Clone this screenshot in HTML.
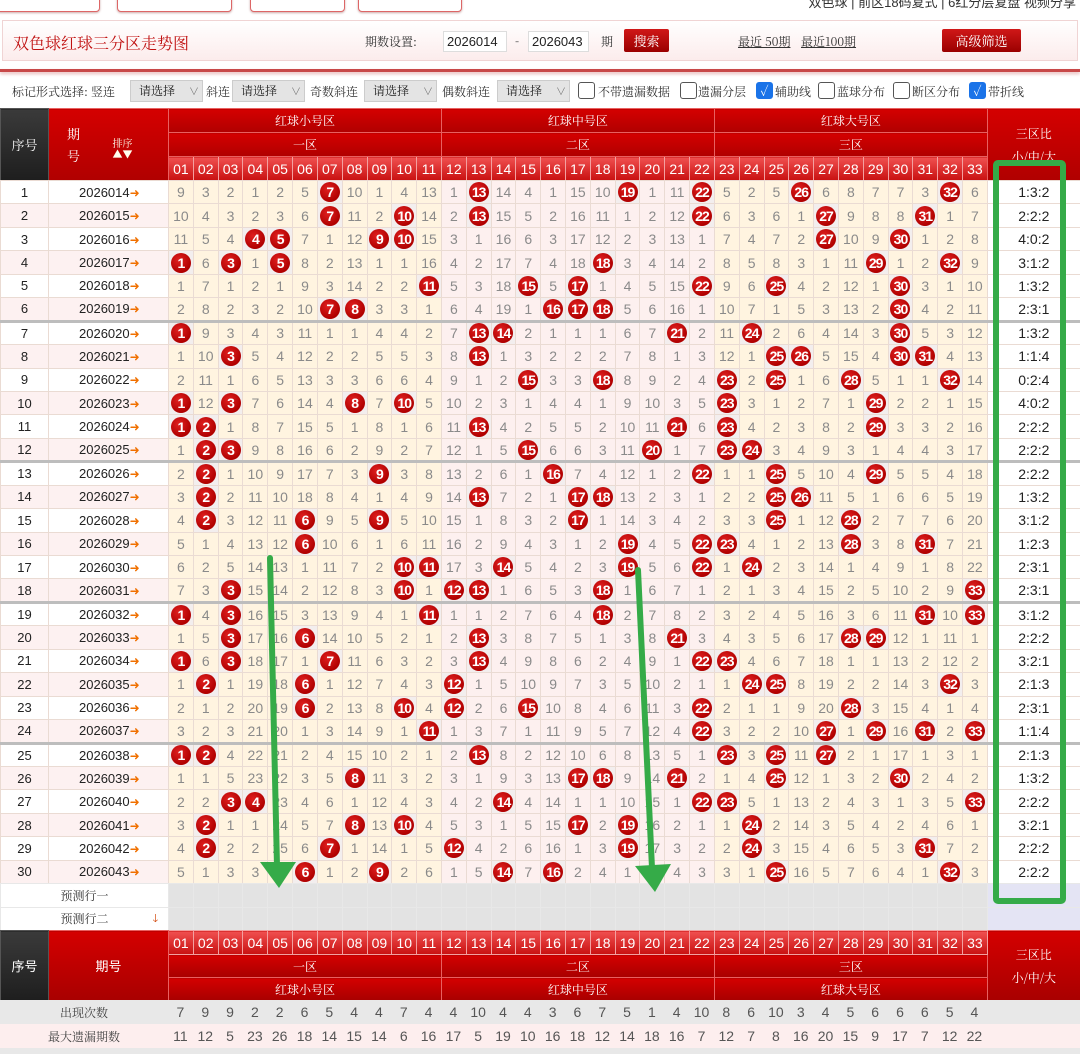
<!DOCTYPE html>
<html><head><meta charset="utf-8">
<style>
*{box-sizing:border-box;margin:0;padding:0}
html,body{width:1080px;height:1054px;overflow:hidden}
body{background:#fff;font-family:"Liberation Sans Narrow","Liberation Sans","Noto Sans CJK SC",sans-serif;position:relative;color:#333}
.tab{position:absolute;top:-10px;height:22px;border:1px solid #d66;border-radius:4px;background:#fff;box-shadow:0 1px 2px #caa}
.topr{position:absolute;top:-8px;right:4px;font-size:13px;color:#333;white-space:nowrap}
.hdr{position:absolute;left:2px;top:20px;width:1076px;height:41px;background:linear-gradient(#fff,#fcecec);border:1px solid #f0d4d4}
.hdr .t{position:absolute;left:10px;top:10px;font-size:16px;color:#c01010;font-family:"Noto Serif CJK SC","Liberation Serif",serif}
.hdr span{position:absolute;font-size:12px;color:#333;font-family:"Noto Serif CJK SC",serif}
.inp{position:absolute;top:10px;height:21px;border:1px solid #ddd;background:#fff;font-size:13px;line-height:19px;padding-left:3px;color:#222}
.btn{position:absolute;top:8px;height:23px;background:linear-gradient(#d01818,#9a0000);color:#fff;font-size:13px;line-height:23px;text-align:center;border-radius:2px;font-family:"Noto Serif CJK SC",serif}
.lnk{text-decoration:underline}
.redline{position:absolute;left:0;top:69px;width:1080px;height:3px;background:#c84848;box-shadow:0 2px 3px #e8b8b8}
.tb{position:absolute;left:0;top:76px;width:1080px;height:30px;font-size:12px;font-family:"Noto Serif CJK SC",serif;color:#333}
.tb span{position:absolute;top:7px}
.sel{position:absolute;top:4px;height:22px;background:#e4e4e4;border:1px solid #ccc;font-size:12px;line-height:20px;padding-left:8px;color:#222}
.sel:after{content:"∨";position:absolute;right:3px;top:0;font-size:10px;color:#555}
.cb{position:absolute;top:6px;width:17px;height:17px;border:1px solid #555;border-radius:3px;background:#fff}
.cb.on{background:#1a73e8;border-color:#1a73e8;color:#fff;font-size:13px;line-height:16px;text-align:center}
table{border-collapse:collapse;table-layout:fixed;position:absolute;left:0;width:1080px}
td{padding:0;text-align:center;overflow:hidden;white-space:nowrap}
#th{top:108px}
#th td{color:#fff;font-family:"Noto Serif CJK SC",serif;font-size:12px;background:linear-gradient(#d40000,#b00000);border:1px solid #e86060}
#th td.dk,#bh td.dk{background:linear-gradient(#3a3a3a,#1e1e1e);border-color:#555}
#th tr.nums td,#bh tr.nums td{background:linear-gradient(#f05050,#c81010);font-family:"Liberation Sans Narrow","Liberation Sans",sans-serif;font-size:14px;border:1px solid #f3a0a0}
#dt{top:180px}
#dt tr{height:23.45px}
#dt td{font-size:14px;color:#8a8a8a;border:1px solid #eadbd3}
#dt td.n{color:#222;background:#fff;font-size:13px}
#dt td.p{color:#222;background:#fff;font-size:13px;text-align:left;padding-left:30px}
#dt tr:nth-child(even) td.n,#dt tr:nth-child(even) td.p{background:#fdf1f1}
#dt td.p i{font-style:normal;color:#f07000;font-size:12px}
#dt td.r{background:#fff;color:#222;font-size:14px}
#dt td.h{background:#f3eeee}
#dt tr.s td{border-bottom:3px solid #bdbdbd}
#dt b{display:inline-block;width:20px;height:20px;border-radius:50%;background:radial-gradient(circle at 40% 35%,#e02020,#b00000 70%);color:#fff;font-size:14px;line-height:20px;font-weight:bold;letter-spacing:-1px;vertical-align:middle}
col.z1,col.z3{background:#fff4e0}
col.z2{background:#fdf0ef}
#pr{top:883px}
#pr td{height:23.5px;border:1px solid #e8e8e8;background:#e3e3e3;font-size:12px;font-family:"Noto Serif CJK SC",serif;color:#333}
#pr td.w{background:#fff}
#pr td.l{background:#e4e4f4}
#bh{top:930px}
#bh td{color:#fff;font-family:"Noto Serif CJK SC",serif;font-size:12px;background:linear-gradient(#d40000,#a80000);border:1px solid #e86060}
#st{top:1000px}
#st td{height:24px;font-size:14px;color:#555;background:#e8e8e8;border:0}
#st tr.pk td{background:#fdeeee}
#st td.lb{font-family:"Noto Serif CJK SC",serif;font-size:12px;color:#444}
svg.ov{position:absolute;left:0;top:0}
</style></head><body>
<div class="tab" style="left:-4px;width:104px"></div>
<div class="tab" style="left:117px;width:115px"></div>
<div class="tab" style="left:250px;width:95px"></div>
<div class="tab" style="left:358px;width:104px"></div>
<div class="topr">双色球 | 前区18码复式 | 6红分层复盘 视频分享</div>
<div class="hdr">
<div class="t">双色球红球三分区走势图</div>
<span style="left:362px;top:12px">期数设置:</span>
<div class="inp" style="left:440px;width:64px">2026014</div>
<span style="left:512px;top:11px">-</span>
<div class="inp" style="left:525px;width:61px">2026043</div>
<span style="left:598px;top:12px">期</span>
<div class="btn" style="left:621px;width:45px">搜索</div>
<span class="lnk" style="left:735px;top:12px">最近 50期</span>
<span class="lnk" style="left:798px;top:12px">最近100期</span>
<div class="btn" style="left:939px;width:79px">高级筛选</div>
</div>
<div class="redline"></div>
<div class="tb">
<span style="left:12px">标记形式选择: 竖连</span>
<div class="sel" style="left:130px;width:73px">请选择</div>
<span style="left:206px">斜连</span>
<div class="sel" style="left:232px;width:73px">请选择</div>
<span style="left:310px">奇数斜连</span>
<div class="sel" style="left:364px;width:73px">请选择</div>
<span style="left:442px">偶数斜连</span>
<div class="sel" style="left:497px;width:73px">请选择</div>
<div class="cb" style="left:578px"></div><span style="left:598px">不带遗漏数据</span>
<div class="cb" style="left:680px"></div><span style="left:698px">遗漏分层</span>
<div class="cb on" style="left:756px">✓</div><span style="left:775px">辅助线</span>
<div class="cb" style="left:818px"></div><span style="left:837px">蓝球分布</span>
<div class="cb" style="left:893px"></div><span style="left:912px">断区分布</span>
<div class="cb on" style="left:969px">✓</div><span style="left:988px">带折线</span>
</div>

<table id="th">
<colgroup><col style="width:48px"><col style="width:120px"><col span="33" style="width:24.82px"><col style="width:93px"></colgroup>
<tr style="height:24px"><td class="dk" rowspan="3" style="font-size:13px">序号</td><td rowspan="3" style="font-size:13px;line-height:22px;text-align:left;padding-left:18px">期<br>号<span style="position:absolute;left:112px;top:28px;font-size:10px;line-height:11px;color:#ffe">排序<br>▲▼</span></td><td colspan="11">红球小号区</td><td colspan="11">红球中号区</td><td colspan="11">红球大号区</td><td rowspan="3" style="line-height:23px;font-size:12px">三区比<br>小/中/大</td></tr>
<tr style="height:24px"><td colspan="11">一区</td><td colspan="11">二区</td><td colspan="11">三区</td></tr>
<tr class="nums" style="height:24px"><td>01</td><td>02</td><td>03</td><td>04</td><td>05</td><td>06</td><td>07</td><td>08</td><td>09</td><td>10</td><td>11</td><td>12</td><td>13</td><td>14</td><td>15</td><td>16</td><td>17</td><td>18</td><td>19</td><td>20</td><td>21</td><td>22</td><td>23</td><td>24</td><td>25</td><td>26</td><td>27</td><td>28</td><td>29</td><td>30</td><td>31</td><td>32</td><td>33</td></tr>
</table>

<table id="dt">
<colgroup><col style="width:48px"><col style="width:120px"><col class="z1" span="11" style="width:24.82px"><col class="z2" span="11" style="width:24.82px"><col class="z3" span="11" style="width:24.82px"><col style="width:93px"></colgroup>
<tr><td class="n">1</td><td class="p">2026014<i>➜</i></td><td>9</td><td>3</td><td>2</td><td>1</td><td>2</td><td>5</td><td class="h"><b>7</b></td><td>10</td><td>1</td><td>4</td><td>13</td><td>1</td><td class="h"><b>13</b></td><td>14</td><td>4</td><td>1</td><td>15</td><td>10</td><td class="h"><b>19</b></td><td>1</td><td>11</td><td class="h"><b>22</b></td><td>5</td><td>2</td><td>5</td><td class="h"><b>26</b></td><td>6</td><td>8</td><td>7</td><td>7</td><td>3</td><td class="h"><b>32</b></td><td>6</td><td class="r">1:3:2</td></tr>
<tr><td class="n">2</td><td class="p">2026015<i>➜</i></td><td>10</td><td>4</td><td>3</td><td>2</td><td>3</td><td>6</td><td class="h"><b>7</b></td><td>11</td><td>2</td><td class="h"><b>10</b></td><td>14</td><td>2</td><td class="h"><b>13</b></td><td>15</td><td>5</td><td>2</td><td>16</td><td>11</td><td>1</td><td>2</td><td>12</td><td class="h"><b>22</b></td><td>6</td><td>3</td><td>6</td><td>1</td><td class="h"><b>27</b></td><td>9</td><td>8</td><td>8</td><td class="h"><b>31</b></td><td>1</td><td>7</td><td class="r">2:2:2</td></tr>
<tr><td class="n">3</td><td class="p">2026016<i>➜</i></td><td>11</td><td>5</td><td>4</td><td class="h"><b>4</b></td><td class="h"><b>5</b></td><td>7</td><td>1</td><td>12</td><td class="h"><b>9</b></td><td class="h"><b>10</b></td><td>15</td><td>3</td><td>1</td><td>16</td><td>6</td><td>3</td><td>17</td><td>12</td><td>2</td><td>3</td><td>13</td><td>1</td><td>7</td><td>4</td><td>7</td><td>2</td><td class="h"><b>27</b></td><td>10</td><td>9</td><td class="h"><b>30</b></td><td>1</td><td>2</td><td>8</td><td class="r">4:0:2</td></tr>
<tr><td class="n">4</td><td class="p">2026017<i>➜</i></td><td class="h"><b>1</b></td><td>6</td><td class="h"><b>3</b></td><td>1</td><td class="h"><b>5</b></td><td>8</td><td>2</td><td>13</td><td>1</td><td>1</td><td>16</td><td>4</td><td>2</td><td>17</td><td>7</td><td>4</td><td>18</td><td class="h"><b>18</b></td><td>3</td><td>4</td><td>14</td><td>2</td><td>8</td><td>5</td><td>8</td><td>3</td><td>1</td><td>11</td><td class="h"><b>29</b></td><td>1</td><td>2</td><td class="h"><b>32</b></td><td>9</td><td class="r">3:1:2</td></tr>
<tr><td class="n">5</td><td class="p">2026018<i>➜</i></td><td>1</td><td>7</td><td>1</td><td>2</td><td>1</td><td>9</td><td>3</td><td>14</td><td>2</td><td>2</td><td class="h"><b>11</b></td><td>5</td><td>3</td><td>18</td><td class="h"><b>15</b></td><td>5</td><td class="h"><b>17</b></td><td>1</td><td>4</td><td>5</td><td>15</td><td class="h"><b>22</b></td><td>9</td><td>6</td><td class="h"><b>25</b></td><td>4</td><td>2</td><td>12</td><td>1</td><td class="h"><b>30</b></td><td>3</td><td>1</td><td>10</td><td class="r">1:3:2</td></tr>
<tr class="s"><td class="n">6</td><td class="p">2026019<i>➜</i></td><td>2</td><td>8</td><td>2</td><td>3</td><td>2</td><td>10</td><td class="h"><b>7</b></td><td class="h"><b>8</b></td><td>3</td><td>3</td><td>1</td><td>6</td><td>4</td><td>19</td><td>1</td><td class="h"><b>16</b></td><td class="h"><b>17</b></td><td class="h"><b>18</b></td><td>5</td><td>6</td><td>16</td><td>1</td><td>10</td><td>7</td><td>1</td><td>5</td><td>3</td><td>13</td><td>2</td><td class="h"><b>30</b></td><td>4</td><td>2</td><td>11</td><td class="r">2:3:1</td></tr>
<tr><td class="n">7</td><td class="p">2026020<i>➜</i></td><td class="h"><b>1</b></td><td>9</td><td>3</td><td>4</td><td>3</td><td>11</td><td>1</td><td>1</td><td>4</td><td>4</td><td>2</td><td>7</td><td class="h"><b>13</b></td><td class="h"><b>14</b></td><td>2</td><td>1</td><td>1</td><td>1</td><td>6</td><td>7</td><td class="h"><b>21</b></td><td>2</td><td>11</td><td class="h"><b>24</b></td><td>2</td><td>6</td><td>4</td><td>14</td><td>3</td><td class="h"><b>30</b></td><td>5</td><td>3</td><td>12</td><td class="r">1:3:2</td></tr>
<tr><td class="n">8</td><td class="p">2026021<i>➜</i></td><td>1</td><td>10</td><td class="h"><b>3</b></td><td>5</td><td>4</td><td>12</td><td>2</td><td>2</td><td>5</td><td>5</td><td>3</td><td>8</td><td class="h"><b>13</b></td><td>1</td><td>3</td><td>2</td><td>2</td><td>2</td><td>7</td><td>8</td><td>1</td><td>3</td><td>12</td><td>1</td><td class="h"><b>25</b></td><td class="h"><b>26</b></td><td>5</td><td>15</td><td>4</td><td class="h"><b>30</b></td><td class="h"><b>31</b></td><td>4</td><td>13</td><td class="r">1:1:4</td></tr>
<tr><td class="n">9</td><td class="p">2026022<i>➜</i></td><td>2</td><td>11</td><td>1</td><td>6</td><td>5</td><td>13</td><td>3</td><td>3</td><td>6</td><td>6</td><td>4</td><td>9</td><td>1</td><td>2</td><td class="h"><b>15</b></td><td>3</td><td>3</td><td class="h"><b>18</b></td><td>8</td><td>9</td><td>2</td><td>4</td><td class="h"><b>23</b></td><td>2</td><td class="h"><b>25</b></td><td>1</td><td>6</td><td class="h"><b>28</b></td><td>5</td><td>1</td><td>1</td><td class="h"><b>32</b></td><td>14</td><td class="r">0:2:4</td></tr>
<tr><td class="n">10</td><td class="p">2026023<i>➜</i></td><td class="h"><b>1</b></td><td>12</td><td class="h"><b>3</b></td><td>7</td><td>6</td><td>14</td><td>4</td><td class="h"><b>8</b></td><td>7</td><td class="h"><b>10</b></td><td>5</td><td>10</td><td>2</td><td>3</td><td>1</td><td>4</td><td>4</td><td>1</td><td>9</td><td>10</td><td>3</td><td>5</td><td class="h"><b>23</b></td><td>3</td><td>1</td><td>2</td><td>7</td><td>1</td><td class="h"><b>29</b></td><td>2</td><td>2</td><td>1</td><td>15</td><td class="r">4:0:2</td></tr>
<tr><td class="n">11</td><td class="p">2026024<i>➜</i></td><td class="h"><b>1</b></td><td class="h"><b>2</b></td><td>1</td><td>8</td><td>7</td><td>15</td><td>5</td><td>1</td><td>8</td><td>1</td><td>6</td><td>11</td><td class="h"><b>13</b></td><td>4</td><td>2</td><td>5</td><td>5</td><td>2</td><td>10</td><td>11</td><td class="h"><b>21</b></td><td>6</td><td class="h"><b>23</b></td><td>4</td><td>2</td><td>3</td><td>8</td><td>2</td><td class="h"><b>29</b></td><td>3</td><td>3</td><td>2</td><td>16</td><td class="r">2:2:2</td></tr>
<tr class="s"><td class="n">12</td><td class="p">2026025<i>➜</i></td><td>1</td><td class="h"><b>2</b></td><td class="h"><b>3</b></td><td>9</td><td>8</td><td>16</td><td>6</td><td>2</td><td>9</td><td>2</td><td>7</td><td>12</td><td>1</td><td>5</td><td class="h"><b>15</b></td><td>6</td><td>6</td><td>3</td><td>11</td><td class="h"><b>20</b></td><td>1</td><td>7</td><td class="h"><b>23</b></td><td class="h"><b>24</b></td><td>3</td><td>4</td><td>9</td><td>3</td><td>1</td><td>4</td><td>4</td><td>3</td><td>17</td><td class="r">2:2:2</td></tr>
<tr><td class="n">13</td><td class="p">2026026<i>➜</i></td><td>2</td><td class="h"><b>2</b></td><td>1</td><td>10</td><td>9</td><td>17</td><td>7</td><td>3</td><td class="h"><b>9</b></td><td>3</td><td>8</td><td>13</td><td>2</td><td>6</td><td>1</td><td class="h"><b>16</b></td><td>7</td><td>4</td><td>12</td><td>1</td><td>2</td><td class="h"><b>22</b></td><td>1</td><td>1</td><td class="h"><b>25</b></td><td>5</td><td>10</td><td>4</td><td class="h"><b>29</b></td><td>5</td><td>5</td><td>4</td><td>18</td><td class="r">2:2:2</td></tr>
<tr><td class="n">14</td><td class="p">2026027<i>➜</i></td><td>3</td><td class="h"><b>2</b></td><td>2</td><td>11</td><td>10</td><td>18</td><td>8</td><td>4</td><td>1</td><td>4</td><td>9</td><td>14</td><td class="h"><b>13</b></td><td>7</td><td>2</td><td>1</td><td class="h"><b>17</b></td><td class="h"><b>18</b></td><td>13</td><td>2</td><td>3</td><td>1</td><td>2</td><td>2</td><td class="h"><b>25</b></td><td class="h"><b>26</b></td><td>11</td><td>5</td><td>1</td><td>6</td><td>6</td><td>5</td><td>19</td><td class="r">1:3:2</td></tr>
<tr><td class="n">15</td><td class="p">2026028<i>➜</i></td><td>4</td><td class="h"><b>2</b></td><td>3</td><td>12</td><td>11</td><td class="h"><b>6</b></td><td>9</td><td>5</td><td class="h"><b>9</b></td><td>5</td><td>10</td><td>15</td><td>1</td><td>8</td><td>3</td><td>2</td><td class="h"><b>17</b></td><td>1</td><td>14</td><td>3</td><td>4</td><td>2</td><td>3</td><td>3</td><td class="h"><b>25</b></td><td>1</td><td>12</td><td class="h"><b>28</b></td><td>2</td><td>7</td><td>7</td><td>6</td><td>20</td><td class="r">3:1:2</td></tr>
<tr><td class="n">16</td><td class="p">2026029<i>➜</i></td><td>5</td><td>1</td><td>4</td><td>13</td><td>12</td><td class="h"><b>6</b></td><td>10</td><td>6</td><td>1</td><td>6</td><td>11</td><td>16</td><td>2</td><td>9</td><td>4</td><td>3</td><td>1</td><td>2</td><td class="h"><b>19</b></td><td>4</td><td>5</td><td class="h"><b>22</b></td><td class="h"><b>23</b></td><td>4</td><td>1</td><td>2</td><td>13</td><td class="h"><b>28</b></td><td>3</td><td>8</td><td class="h"><b>31</b></td><td>7</td><td>21</td><td class="r">1:2:3</td></tr>
<tr><td class="n">17</td><td class="p">2026030<i>➜</i></td><td>6</td><td>2</td><td>5</td><td>14</td><td>13</td><td>1</td><td>11</td><td>7</td><td>2</td><td class="h"><b>10</b></td><td class="h"><b>11</b></td><td>17</td><td>3</td><td class="h"><b>14</b></td><td>5</td><td>4</td><td>2</td><td>3</td><td class="h"><b>19</b></td><td>5</td><td>6</td><td class="h"><b>22</b></td><td>1</td><td class="h"><b>24</b></td><td>2</td><td>3</td><td>14</td><td>1</td><td>4</td><td>9</td><td>1</td><td>8</td><td>22</td><td class="r">2:3:1</td></tr>
<tr class="s"><td class="n">18</td><td class="p">2026031<i>➜</i></td><td>7</td><td>3</td><td class="h"><b>3</b></td><td>15</td><td>14</td><td>2</td><td>12</td><td>8</td><td>3</td><td class="h"><b>10</b></td><td>1</td><td class="h"><b>12</b></td><td class="h"><b>13</b></td><td>1</td><td>6</td><td>5</td><td>3</td><td class="h"><b>18</b></td><td>1</td><td>6</td><td>7</td><td>1</td><td>2</td><td>1</td><td>3</td><td>4</td><td>15</td><td>2</td><td>5</td><td>10</td><td>2</td><td>9</td><td class="h"><b>33</b></td><td class="r">2:3:1</td></tr>
<tr><td class="n">19</td><td class="p">2026032<i>➜</i></td><td class="h"><b>1</b></td><td>4</td><td class="h"><b>3</b></td><td>16</td><td>15</td><td>3</td><td>13</td><td>9</td><td>4</td><td>1</td><td class="h"><b>11</b></td><td>1</td><td>1</td><td>2</td><td>7</td><td>6</td><td>4</td><td class="h"><b>18</b></td><td>2</td><td>7</td><td>8</td><td>2</td><td>3</td><td>2</td><td>4</td><td>5</td><td>16</td><td>3</td><td>6</td><td>11</td><td class="h"><b>31</b></td><td>10</td><td class="h"><b>33</b></td><td class="r">3:1:2</td></tr>
<tr><td class="n">20</td><td class="p">2026033<i>➜</i></td><td>1</td><td>5</td><td class="h"><b>3</b></td><td>17</td><td>16</td><td class="h"><b>6</b></td><td>14</td><td>10</td><td>5</td><td>2</td><td>1</td><td>2</td><td class="h"><b>13</b></td><td>3</td><td>8</td><td>7</td><td>5</td><td>1</td><td>3</td><td>8</td><td class="h"><b>21</b></td><td>3</td><td>4</td><td>3</td><td>5</td><td>6</td><td>17</td><td class="h"><b>28</b></td><td class="h"><b>29</b></td><td>12</td><td>1</td><td>11</td><td>1</td><td class="r">2:2:2</td></tr>
<tr><td class="n">21</td><td class="p">2026034<i>➜</i></td><td class="h"><b>1</b></td><td>6</td><td class="h"><b>3</b></td><td>18</td><td>17</td><td>1</td><td class="h"><b>7</b></td><td>11</td><td>6</td><td>3</td><td>2</td><td>3</td><td class="h"><b>13</b></td><td>4</td><td>9</td><td>8</td><td>6</td><td>2</td><td>4</td><td>9</td><td>1</td><td class="h"><b>22</b></td><td class="h"><b>23</b></td><td>4</td><td>6</td><td>7</td><td>18</td><td>1</td><td>1</td><td>13</td><td>2</td><td>12</td><td>2</td><td class="r">3:2:1</td></tr>
<tr><td class="n">22</td><td class="p">2026035<i>➜</i></td><td>1</td><td class="h"><b>2</b></td><td>1</td><td>19</td><td>18</td><td class="h"><b>6</b></td><td>1</td><td>12</td><td>7</td><td>4</td><td>3</td><td class="h"><b>12</b></td><td>1</td><td>5</td><td>10</td><td>9</td><td>7</td><td>3</td><td>5</td><td>10</td><td>2</td><td>1</td><td>1</td><td class="h"><b>24</b></td><td class="h"><b>25</b></td><td>8</td><td>19</td><td>2</td><td>2</td><td>14</td><td>3</td><td class="h"><b>32</b></td><td>3</td><td class="r">2:1:3</td></tr>
<tr><td class="n">23</td><td class="p">2026036<i>➜</i></td><td>2</td><td>1</td><td>2</td><td>20</td><td>19</td><td class="h"><b>6</b></td><td>2</td><td>13</td><td>8</td><td class="h"><b>10</b></td><td>4</td><td class="h"><b>12</b></td><td>2</td><td>6</td><td class="h"><b>15</b></td><td>10</td><td>8</td><td>4</td><td>6</td><td>11</td><td>3</td><td class="h"><b>22</b></td><td>2</td><td>1</td><td>1</td><td>9</td><td>20</td><td class="h"><b>28</b></td><td>3</td><td>15</td><td>4</td><td>1</td><td>4</td><td class="r">2:3:1</td></tr>
<tr class="s"><td class="n">24</td><td class="p">2026037<i>➜</i></td><td>3</td><td>2</td><td>3</td><td>21</td><td>20</td><td>1</td><td>3</td><td>14</td><td>9</td><td>1</td><td class="h"><b>11</b></td><td>1</td><td>3</td><td>7</td><td>1</td><td>11</td><td>9</td><td>5</td><td>7</td><td>12</td><td>4</td><td class="h"><b>22</b></td><td>3</td><td>2</td><td>2</td><td>10</td><td class="h"><b>27</b></td><td>1</td><td class="h"><b>29</b></td><td>16</td><td class="h"><b>31</b></td><td>2</td><td class="h"><b>33</b></td><td class="r">1:1:4</td></tr>
<tr><td class="n">25</td><td class="p">2026038<i>➜</i></td><td class="h"><b>1</b></td><td class="h"><b>2</b></td><td>4</td><td>22</td><td>21</td><td>2</td><td>4</td><td>15</td><td>10</td><td>2</td><td>1</td><td>2</td><td class="h"><b>13</b></td><td>8</td><td>2</td><td>12</td><td>10</td><td>6</td><td>8</td><td>13</td><td>5</td><td>1</td><td class="h"><b>23</b></td><td>3</td><td class="h"><b>25</b></td><td>11</td><td class="h"><b>27</b></td><td>2</td><td>1</td><td>17</td><td>1</td><td>3</td><td>1</td><td class="r">2:1:3</td></tr>
<tr><td class="n">26</td><td class="p">2026039<i>➜</i></td><td>1</td><td>1</td><td>5</td><td>23</td><td>22</td><td>3</td><td>5</td><td class="h"><b>8</b></td><td>11</td><td>3</td><td>2</td><td>3</td><td>1</td><td>9</td><td>3</td><td>13</td><td class="h"><b>17</b></td><td class="h"><b>18</b></td><td>9</td><td>14</td><td class="h"><b>21</b></td><td>2</td><td>1</td><td>4</td><td class="h"><b>25</b></td><td>12</td><td>1</td><td>3</td><td>2</td><td class="h"><b>30</b></td><td>2</td><td>4</td><td>2</td><td class="r">1:3:2</td></tr>
<tr><td class="n">27</td><td class="p">2026040<i>➜</i></td><td>2</td><td>2</td><td class="h"><b>3</b></td><td class="h"><b>4</b></td><td>23</td><td>4</td><td>6</td><td>1</td><td>12</td><td>4</td><td>3</td><td>4</td><td>2</td><td class="h"><b>14</b></td><td>4</td><td>14</td><td>1</td><td>1</td><td>10</td><td>15</td><td>1</td><td class="h"><b>22</b></td><td class="h"><b>23</b></td><td>5</td><td>1</td><td>13</td><td>2</td><td>4</td><td>3</td><td>1</td><td>3</td><td>5</td><td class="h"><b>33</b></td><td class="r">2:2:2</td></tr>
<tr><td class="n">28</td><td class="p">2026041<i>➜</i></td><td>3</td><td class="h"><b>2</b></td><td>1</td><td>1</td><td>24</td><td>5</td><td>7</td><td class="h"><b>8</b></td><td>13</td><td class="h"><b>10</b></td><td>4</td><td>5</td><td>3</td><td>1</td><td>5</td><td>15</td><td class="h"><b>17</b></td><td>2</td><td class="h"><b>19</b></td><td>16</td><td>2</td><td>1</td><td>1</td><td class="h"><b>24</b></td><td>2</td><td>14</td><td>3</td><td>5</td><td>4</td><td>2</td><td>4</td><td>6</td><td>1</td><td class="r">3:2:1</td></tr>
<tr><td class="n">29</td><td class="p">2026042<i>➜</i></td><td>4</td><td class="h"><b>2</b></td><td>2</td><td>2</td><td>25</td><td>6</td><td class="h"><b>7</b></td><td>1</td><td>14</td><td>1</td><td>5</td><td class="h"><b>12</b></td><td>4</td><td>2</td><td>6</td><td>16</td><td>1</td><td>3</td><td class="h"><b>19</b></td><td>17</td><td>3</td><td>2</td><td>2</td><td class="h"><b>24</b></td><td>3</td><td>15</td><td>4</td><td>6</td><td>5</td><td>3</td><td class="h"><b>31</b></td><td>7</td><td>2</td><td class="r">2:2:2</td></tr>
<tr><td class="n">30</td><td class="p">2026043<i>➜</i></td><td>5</td><td>1</td><td>3</td><td>3</td><td>26</td><td class="h"><b>6</b></td><td>1</td><td>2</td><td class="h"><b>9</b></td><td>2</td><td>6</td><td>1</td><td>5</td><td class="h"><b>14</b></td><td>7</td><td class="h"><b>16</b></td><td>2</td><td>4</td><td>1</td><td>18</td><td>4</td><td>3</td><td>3</td><td>1</td><td class="h"><b>25</b></td><td>16</td><td>5</td><td>7</td><td>6</td><td>4</td><td>1</td><td class="h"><b>32</b></td><td>3</td><td class="r">2:2:2</td></tr>
</table>

<table id="pr">
<colgroup><col style="width:168px"><col span="33" style="width:24.82px"><col style="width:93px"></colgroup>
<tr><td class="w">预测行一</td><td></td><td></td><td></td><td></td><td></td><td></td><td></td><td></td><td></td><td></td><td></td><td></td><td></td><td></td><td></td><td></td><td></td><td></td><td></td><td></td><td></td><td></td><td></td><td></td><td></td><td></td><td></td><td></td><td></td><td></td><td></td><td></td><td></td><td class="l"></td></tr>
<tr><td class="w">预测行二<span style="position:absolute;left:152px;color:#d04000;font-size:11px">🡓</span></td><td></td><td></td><td></td><td></td><td></td><td></td><td></td><td></td><td></td><td></td><td></td><td></td><td></td><td></td><td></td><td></td><td></td><td></td><td></td><td></td><td></td><td></td><td></td><td></td><td></td><td></td><td></td><td></td><td></td><td></td><td></td><td></td><td></td><td class="l"></td></tr>
</table>

<table id="bh">
<colgroup><col style="width:48px"><col style="width:120px"><col span="33" style="width:24.82px"><col style="width:93px"></colgroup>
<tr class="nums" style="height:24px"><td class="dk" rowspan="3" style="font-size:13px;background:linear-gradient(#3a3a3a,#1e1e1e);border-color:#555">序号</td><td rowspan="3" style="font-size:13px;background:linear-gradient(#d40000,#a80000);border-color:#e86060">期号</td><td>01</td><td>02</td><td>03</td><td>04</td><td>05</td><td>06</td><td>07</td><td>08</td><td>09</td><td>10</td><td>11</td><td>12</td><td>13</td><td>14</td><td>15</td><td>16</td><td>17</td><td>18</td><td>19</td><td>20</td><td>21</td><td>22</td><td>23</td><td>24</td><td>25</td><td>26</td><td>27</td><td>28</td><td>29</td><td>30</td><td>31</td><td>32</td><td>33</td><td rowspan="3" style="line-height:23px;font-size:12px;background:linear-gradient(#d40000,#a80000);border-color:#e86060;font-family:'Noto Serif CJK SC',serif">三区比<br>小/中/大</td></tr>
<tr style="height:23px"><td colspan="11">一区</td><td colspan="11">二区</td><td colspan="11">三区</td></tr>
<tr style="height:23px"><td colspan="11">红球小号区</td><td colspan="11">红球中号区</td><td colspan="11">红球大号区</td></tr>
</table>

<table id="st">
<colgroup><col style="width:168px"><col span="33" style="width:24.82px"><col style="width:93px"></colgroup>
<tr><td class="lb">出现次数</td><td>7</td><td>9</td><td>9</td><td>2</td><td>2</td><td>6</td><td>5</td><td>4</td><td>4</td><td>7</td><td>4</td><td>4</td><td>10</td><td>4</td><td>4</td><td>3</td><td>6</td><td>7</td><td>5</td><td>1</td><td>4</td><td>10</td><td>8</td><td>6</td><td>10</td><td>3</td><td>4</td><td>5</td><td>6</td><td>6</td><td>6</td><td>5</td><td>4</td><td></td></tr>
<tr class="pk"><td class="lb">最大遗漏期数</td><td>11</td><td>12</td><td>5</td><td>23</td><td>26</td><td>18</td><td>14</td><td>15</td><td>14</td><td>6</td><td>16</td><td>17</td><td>5</td><td>19</td><td>10</td><td>16</td><td>18</td><td>12</td><td>14</td><td>18</td><td>16</td><td>7</td><td>12</td><td>7</td><td>8</td><td>16</td><td>20</td><td>15</td><td>9</td><td>17</td><td>7</td><td>12</td><td>22</td><td></td></tr>
<tr><td class="lb">最大连出期数</td><td>2</td><td>3</td><td>2</td><td>1</td><td>1</td><td>2</td><td>2</td><td>1</td><td>1</td><td>1</td><td>1</td><td>1</td><td>2</td><td>1</td><td>1</td><td>1</td><td>2</td><td>1</td><td>2</td><td>1</td><td>1</td><td>2</td><td>1</td><td>2</td><td>2</td><td>1</td><td>1</td><td>1</td><td>1</td><td>2</td><td>1</td><td>1</td><td>1</td><td></td></tr>
</table>

<svg class="ov" width="1080" height="1054" viewBox="0 0 1080 1054">
<g fill="none" stroke="#35ab48" stroke-width="6" stroke-linecap="round">
<rect x="996" y="163" width="67" height="738" rx="2"/>
<path d="M270 558 L277 866"/>
<path d="M638 570 L652 868"/>
</g>
<g fill="#35ab48">
<path d="M260 862 L296 862 L279 888 Z"/>
<path d="M635 866 L671 864 L655 892 Z"/>
</g>
</svg>
</body></html>
